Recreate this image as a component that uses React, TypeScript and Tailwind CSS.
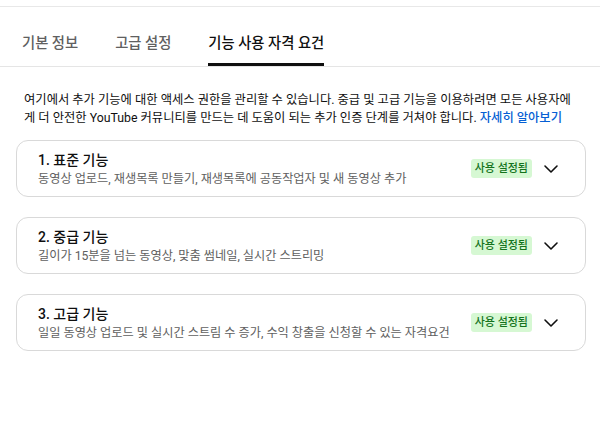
import { ChevronDown } from "lucide-react";

const features = [
  {
    title: "1. 표준 기능",
    desc: "동영상 업로드, 재생목록 만들기, 재생목록에 공동작업자 및 새 동영상 추가",
  },
  {
    title: "2. 중급 기능",
    desc: "길이가 15분을 넘는 동영상, 맞춤 썸네일, 실시간 스트리밍",
  },
  {
    title: "3. 고급 기능",
    desc: "일일 동영상 업로드 및 실시간 스트림 수 증가, 수익 창출을 신청할 수 있는 자격요건",
  },
];

const tabs = ["기본 정보", "고급 설정", "기능 사용 자격 요건"];

export default function App() {
  return (
    <div
      className="h-[425px] w-[600px] bg-white pt-[6px] text-[#0f0f0f]"
      style={{ fontFamily: "Roboto, 'Noto Sans CJK KR', sans-serif" }}
    >
      <div className="border-t border-[#e8e8e8]">
        <nav className="flex h-[60px] items-end gap-[37px] border-b border-[#e5e5e5] pl-[22px]">
          {tabs.map((t, i) => (
            <div
              key={t}
              className={
                i === 2
                  ? "border-b-[3px] border-[#0f0f0f] pb-[10px] text-[14.3px] leading-5 font-medium text-[#0f0f0f]"
                  : "border-b-[3px] border-transparent pb-[10px] text-[14.3px] leading-5 font-medium text-[#606060]"
              }
            >
              {t}
            </div>
          ))}
        </nav>
      </div>

      <p className="mt-[24px] pr-[24px] pl-[24px] text-[12.3px] leading-[18px] text-[#0f0f0f]">
        여기에서 추가 기능에 대한 액세스 권한을 관리할 수 있습니다. 중급 및 고급 기능을 이용하려면 모든 사용자에게 더 안전한 YouTube 커뮤니티를 만드는 데 도움이 되는 추가 인증 단계를 거쳐야 합니다.{" "}
        <span className="font-medium text-[#065fd4]">자세히 알아보기</span>
      </p>

      <div className="mt-[13px] ml-[16px] flex w-[570px] flex-col gap-[20px]">
        {features.map((f) => (
          <div
            key={f.title}
            className="flex h-[57px] items-center rounded-[12px] border border-[#d9d9d9] pr-[22px] pl-[21px]"
          >
            <div className="flex-1">
              <div className="text-[14px] leading-5 font-medium text-[#0f0f0f]">{f.title}</div>
              <div className="text-[12.2px] leading-[18px] text-[#606060]">{f.desc}</div>
            </div>
            <span className="rounded-[3px] bg-[#d6f8d3] px-[4px] text-[11px] leading-[19px] font-medium text-[#13731c]">
              사용 설정됨
            </span>
            <ChevronDown className="ml-[7px] h-6 w-6 text-[#0f0f0f]" strokeWidth={1.6} />
          </div>
        ))}
      </div>
    </div>
  );
}
